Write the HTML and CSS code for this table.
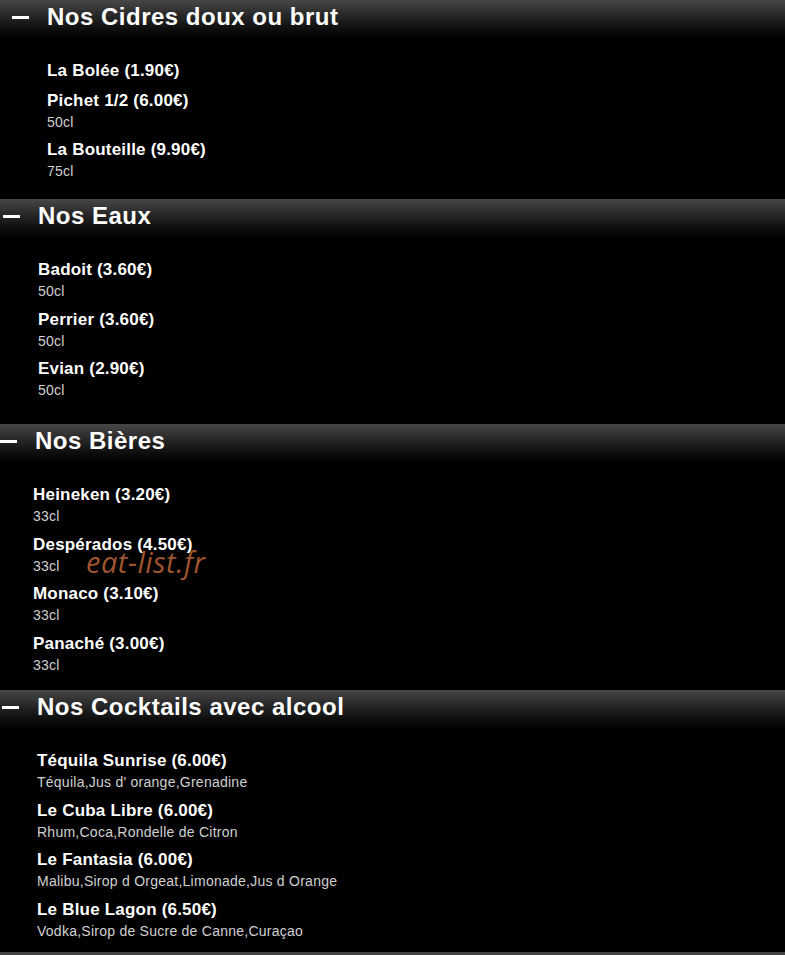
FILE: index.html
```html
<!DOCTYPE html>
<html lang="fr">
<head>
	<meta charset="UTF-8">
	<title>Carte des boissons</title>
	<link rel="stylesheet" href="styles.css">
</head>
<body>
<div class="menu">
	<div class="section section-cidres">
		<h2 class="section-head"><span class="toggle"></span>Nos Cidres doux ou brut</h2>
		<ul class="items">
			<li><strong>La Bolée (1.90€)</strong></li>
			<li><strong>Pichet 1/2 (6.00€)</strong><p>50cl</p></li>
			<li><strong>La Bouteille (9.90€)</strong><p>75cl</p></li>
		</ul>
	</div>
	<div class="section section-eaux">
		<h2 class="section-head"><span class="toggle"></span>Nos Eaux</h2>
		<ul class="items">
			<li><strong>Badoit (3.60€)</strong><p>50cl</p></li>
			<li><strong>Perrier (3.60€)</strong><p>50cl</p></li>
			<li><strong>Evian (2.90€)</strong><p>50cl</p></li>
		</ul>
	</div>
	<div class="section section-bieres">
		<h2 class="section-head"><span class="toggle"></span>Nos Bières</h2>
		<ul class="items">
			<li><strong>Heineken (3.20€)</strong><p>33cl</p></li>
			<li><strong>Despérados (4.50€)</strong><p>33cl</p></li>
			<li><strong>Monaco (3.10€)</strong><p>33cl</p></li>
			<li><strong>Panaché (3.00€)</strong><p>33cl</p></li>
		</ul>
		<span class="watermark">eat-list.fr</span>
	</div>
	<div class="section section-cocktails">
		<h2 class="section-head"><span class="toggle"></span>Nos Cocktails avec alcool</h2>
		<ul class="items">
			<li><strong>Téquila Sunrise (6.00€)</strong><p>Téquila,Jus d' orange,Grenadine</p></li>
			<li><strong>Le Cuba Libre (6.00€)</strong><p>Rhum,Coca,Rondelle de Citron</p></li>
			<li><strong>Le Fantasia (6.00€)</strong><p>Malibu,Sirop d Orgeat,Limonade,Jus d Orange</p></li>
			<li><strong>Le Blue Lagon (6.50€)</strong><p>Vodka,Sirop de Sucre de Canne,Curaçao</p></li>
		</ul>
	</div>
</div>
</body>
</html>
```

FILE: styles.css
```css
*{
	margin: 0;
	padding: 0;
}
li{
	list-style: none;
}
body{
	background: #000;
	font-family: "Liberation Sans", Arial, sans-serif;
	color: #fff;
	overflow: hidden;
}
.menu{
	width: 785px;
	border-bottom: 3px solid #444;
}
.section{
	--indent: 12px;
	position: relative;
	box-sizing: border-box;
	background: #000;
}
.section-cidres{
	--indent: 12px;
	height: 199px;
}
.section-eaux{
	--indent: 3px;
	height: 225px;
}
.section-bieres{
	--indent: -2px;
	height: 266px;
}
.section-cocktails{
	--indent: 2px;
	height: 262px;
}
.section-head{
	display: flex;
	align-items: center;
	height: 40px;
	padding-left: var(--indent);
	padding-bottom: 6px;
	box-sizing: border-box;
	font-size: 24px;
	font-weight: bold;
	line-height: 32px;
	letter-spacing: 0.5px;
	color: #fff;
	background: linear-gradient(#474747 0, #2a2a2a 14px, #0c0c0c 30px, #000 40px);
}
.toggle{
	display: block;
	width: 17px;
	height: 3px;
	background: #fff;
	margin-right: 18px;
	flex-shrink: 0;
}
.items{
	padding: 20px 0 0 calc(var(--indent) + 35px);
}
.items li{
	margin-bottom: 7.5px;
}
.items strong{
	display: block;
	font-size: 17px;
	line-height: 22px;
	letter-spacing: 0.2px;
	color: #fff;
}
.items p{
	font-size: 14px;
	line-height: 20px;
	letter-spacing: 0.25px;
	color: #d0d0d0;
}
.watermark{
	position: absolute;
	left: 86px;
	top: 118px;
	font-family: "Open Sans", "DejaVu Sans", sans-serif;
	font-style: italic;
	font-size: 29px;
	color: rgba(190, 100, 55, 0.85);
	letter-spacing: 0.5px;
}
```
